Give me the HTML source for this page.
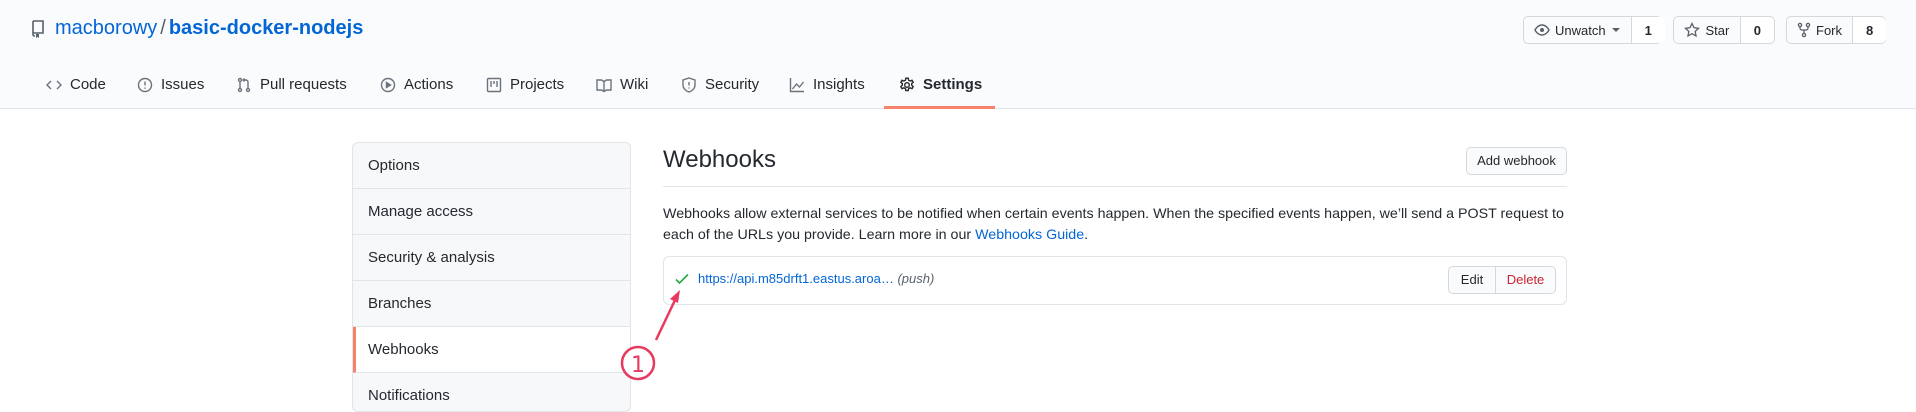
<!DOCTYPE html>
<html><head><meta charset="utf-8"><style>
*{box-sizing:border-box;margin:0;padding:0}
body{width:1916px;height:404px;overflow:hidden;background:#fff;font-family:"Liberation Sans",sans-serif;color:#24292e;position:relative}
.hdr{position:absolute;left:0;top:0;width:1916px;height:109px;background:#fafbfc;border-bottom:1px solid #e1e4e8}
.a{position:absolute}
.tab{position:absolute;top:76px;font-size:15px;color:#24292e;display:flex;align-items:center;gap:8px;white-space:nowrap}
.tab svg{fill:none;stroke:#6a737d;stroke-width:1.4}
.btn{position:absolute;top:16px;height:28px;border:1px solid #d5d8dc;border-radius:5px;background:#fafbfc;display:flex;font-size:13px}
.btn span{display:flex;align-items:center;gap:5px;padding:0 10px}
.btn .c{border-left:1px solid #d5d8dc;background:#fff;font-weight:bold;padding:0 13px;border-radius:0 5px 5px 0}
.side{position:absolute;left:352px;top:142px;width:279px;height:270px;border:1px solid #e1e4e8;border-radius:6px;overflow:hidden;background:#f6f8fa}
.side div{height:46px;border-bottom:1px solid #e1e4e8;padding-left:15px;line-height:46px;font-size:15px;color:#24292e}
.side .act{background:#fff;border-left:3px solid #f9826c;padding-left:12px}
</style></head><body>
<div class="hdr"></div>
<svg class="a" style="left:31px;top:20px" width="14" height="18" viewBox="0 0 14 18"><path d="M2 1h10v12H3.5a1.5 1.5 0 0 0 0 3H4M2 1v14" fill="none" stroke="#586069" stroke-width="1.6"/><path d="M5 14v4l1.5-1 1.5 1v-4z" fill="#586069"/></svg>
<div class="a" style="left:55px;top:17px;font-size:20px;color:#0366d6;white-space:nowrap">macborowy<span style="color:#586069;margin:0 3px">/</span><b>basic-docker-nodejs</b></div>

<div class="tab" style="left:46px"><svg width="16" height="16"><path d="M5 4L1 8l4 4M11 4l4 4-4 4"/></svg>Code</div>
<div class="tab" style="left:137px"><svg width="16" height="16"><circle cx="8" cy="8" r="6.5"/><path d="M8 4.5v4M8 10.5v1.2"/></svg>Issues</div>
<div class="tab" style="left:236px"><svg width="16" height="16"><circle cx="4" cy="3" r="1.5"/><circle cx="4" cy="13" r="1.5"/><circle cx="12" cy="13" r="1.5"/><path d="M4 4.5v7M12 11.5V5a2 2 0 0 0-2-2H7M8.5 1.5L7 3l1.5 1.5"/></svg>Pull requests</div>
<div class="tab" style="left:380px"><svg width="16" height="16"><circle cx="8" cy="8" r="6.5"/><path d="M6.5 5.5v5l4-2.5z" fill="#6a737d"/></svg>Actions</div>
<div class="tab" style="left:486px"><svg width="16" height="16"><rect x="1.5" y="1.5" width="13" height="13" rx="1"/><path d="M5 4v6M8 4v3M11 4v6"/></svg>Projects</div>
<div class="tab" style="left:596px"><svg width="16" height="16"><path d="M1 3h4.5L8 4.5 10.5 3H15v10h-4.5L8 14.5 5.5 13H1zM8 4.5v10"/></svg>Wiki</div>
<div class="tab" style="left:681px"><svg width="16" height="16"><path d="M8 1l6 2v5c0 3.5-3 6-6 7-3-1-6-3.5-6-7V3z"/><path d="M8 5v3.5M8 10.5v1"/></svg>Security</div>
<div class="tab" style="left:789px"><svg width="16" height="16"><path d="M1.5 1v13.5H15M3.5 12l4-5 3 3 4-5"/></svg>Insights</div>
<div class="tab" style="left:899px;font-weight:bold"><svg width="16" height="16" style="stroke:#24292e"><circle cx="8" cy="8" r="2.3"/><path d="M6.8 1.2h2.4l.4 2 1.5.8 1.9-.8 1.2 2-1.5 1.4v1.6l1.5 1.4-1.2 2-1.9-.8-1.5.8-.4 2H6.8l-.4-2-1.5-.8-1.9.8-1.2-2 1.5-1.4V6.6L1.8 5.2l1.2-2 1.9.8 1.5-.8z"/></svg>Settings</div>
<div class="a" style="left:884px;top:106px;width:111px;height:3px;background:#f9826c"></div>

<div class="btn" style="left:1523px;width:139px"><span style="width:108px"><svg width="16" height="16" viewBox="0 0 16 16"><path d="M1 8s2.5-5 7-5 7 5 7 5-2.5 5-7 5-7-5-7-5z" fill="none" stroke="#586069" stroke-width="1.4"/><circle cx="8" cy="8" r="2" fill="#586069"/></svg>Unwatch<svg width="10" height="6"><path d="M1 1h8L5 5z" fill="#586069"/></svg></span><span class="c" style="flex:1;justify-content:center">1</span></div>
<div class="btn" style="left:1673px;width:102px"><span style="width:69px;justify-content:center"><svg width="16" height="16" viewBox="0 0 16 16"><path d="M8 1.5l2 4.2 4.5.6-3.3 3.1.8 4.5L8 11.7l-4 2.2.8-4.5L1.5 6.3 6 5.7z" fill="none" stroke="#586069" stroke-width="1.3"/></svg>Star</span><span class="c" style="flex:1;justify-content:center">0</span></div>
<div class="btn" style="left:1786px;width:100px"><span style="width:68px;justify-content:center"><svg width="14" height="16" viewBox="0 0 14 16"><circle cx="3" cy="3" r="1.6" fill="none" stroke="#586069" stroke-width="1.3"/><circle cx="11" cy="3" r="1.6" fill="none" stroke="#586069" stroke-width="1.3"/><circle cx="7" cy="13" r="1.6" fill="none" stroke="#586069" stroke-width="1.3"/><path d="M3 4.6v1.4a2 2 0 0 0 2 2h4a2 2 0 0 0 2-2V4.6M7 8v3.4" fill="none" stroke="#586069" stroke-width="1.3"/></svg>Fork</span><span class="c" style="flex:1;justify-content:center">8</span></div>

<div class="side"><div>Options</div><div>Manage access</div><div>Security &amp; analysis</div><div>Branches</div><div class="act">Webhooks</div><div>Notifications</div></div>

<div class="a" style="left:663px;top:146px;font-size:24px">Webhooks</div>
<div class="a" style="left:1466px;top:147px;width:101px;height:28px;border:1px solid #d5d8dc;border-radius:5px;background:#fafbfc;font-size:13px;line-height:26px;text-align:center">Add webhook</div>
<div class="a" style="left:663px;top:186px;width:904px;height:1px;background:#e1e4e8"></div>
<div class="a" style="left:663px;top:204px;width:912px;font-size:14.25px;line-height:21px">Webhooks allow external services to be notified when certain events happen. When the specified events happen, we’ll send a POST request to each of the URLs you provide. Learn more in our <span style="color:#0366d6">Webhooks Guide</span>.</div>
<div class="a" style="left:663px;top:256px;width:904px;height:49px;border:1px solid #e1e4e8;border-radius:6px"></div>
<svg class="a" style="left:674px;top:271px" width="16" height="16"><path d="M2 8.5l3.5 3.5L14 3.5" fill="none" stroke="#28a745" stroke-width="1.6"/></svg>
<div class="a" style="left:698px;top:271px;font-size:13px;color:#0366d6;white-space:nowrap">https://api.m85drft1.eastus.aroa… <i style="color:#586069">(push)</i></div>
<div class="a" style="left:1448px;top:266px;width:108px;height:28px;border:1px solid #d5d8dc;border-radius:5px;background:#fafbfc;display:flex;font-size:13px;line-height:26px"><span style="width:46px;text-align:center">Edit</span><span style="flex:1;text-align:center;border-left:1px solid #d5d8dc;color:#cb2431">Delete</span></div>

<svg class="a" style="left:0;top:0" width="1916" height="404"><path d="M656 340L676 298" stroke="#e8395e" stroke-width="2.5" fill="none"/><path d="M680 290l-10 9 8 4z" fill="#e8395e"/><circle cx="638" cy="363" r="16" fill="#fff" stroke="#e8395e" stroke-width="2.5"/><text x="638" y="372" text-anchor="middle" font-family="DejaVu Sans,sans-serif" font-size="22" fill="#e8395e">1</text></svg>
</body></html>
